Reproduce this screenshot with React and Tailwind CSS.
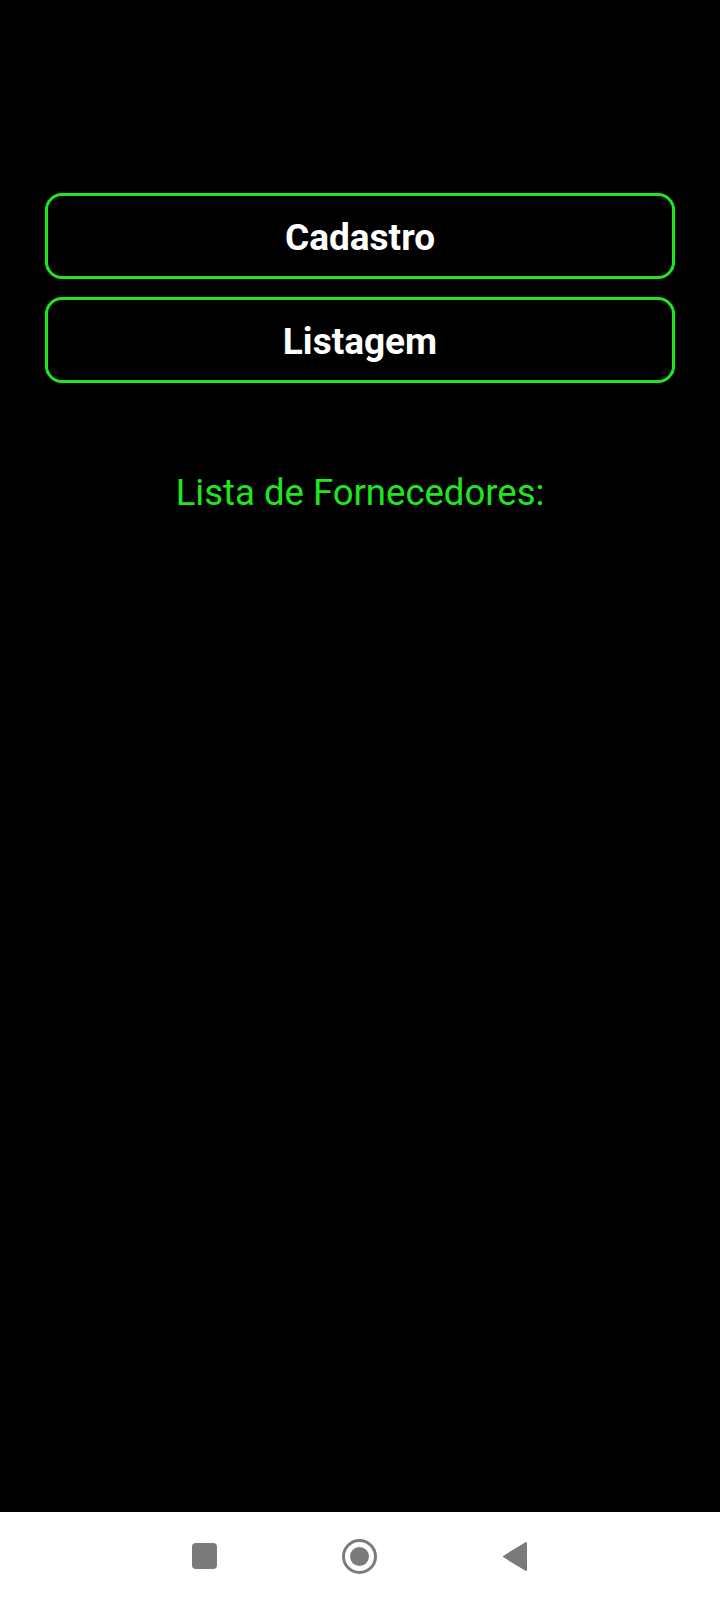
export default function App() {
  return (
    <main className="w-[720px] h-[1600px] flex flex-col bg-black font-['Roboto',sans-serif]">
      <div className="flex-1 flex flex-col px-[45px] pt-[193px]">
        {/* botones */}
        <div className="flex flex-col gap-[18px]">
          <button className="h-[86px] pt-[3px] rounded-[17px] border-[3px] border-[#20e620] text-white text-[37px] leading-[42px] font-bold">
            Cadastro
          </button>
          <button className="h-[86px] pt-[3px] rounded-[17px] border-[3px] border-[#20e620] text-white text-[37px] leading-[42px] font-bold">
            Listagem
          </button>
        </div>

        <h2 className="mt-[89px] text-center text-[36.5px] leading-[42px] text-[#20e620]">
          Lista de Fornecedores:
        </h2>
      </div>

      {/* barra de navegación */}
      <nav className="h-[88px] bg-white flex items-center">
        <div className="w-full flex items-center justify-center gap-[125px]">
          <span className="w-[25px] h-[26px] rounded-[4px] bg-[#7b7b7b]" />
          <span className="w-[35px] h-[35px] rounded-full border-[3px] border-[#7b7b7b] flex items-center justify-center">
            <span className="w-[19px] h-[19px] rounded-full bg-[#7b7b7b]" />
          </span>
          <svg width="26" height="31" viewBox="0 0 26 31">
            <path d="M24 2 L2 15.5 L24 29 Z" fill="#7b7b7b" stroke="#7b7b7b" strokeWidth="2" strokeLinejoin="round" />
          </svg>
        </div>
      </nav>
    </main>
  );
}
